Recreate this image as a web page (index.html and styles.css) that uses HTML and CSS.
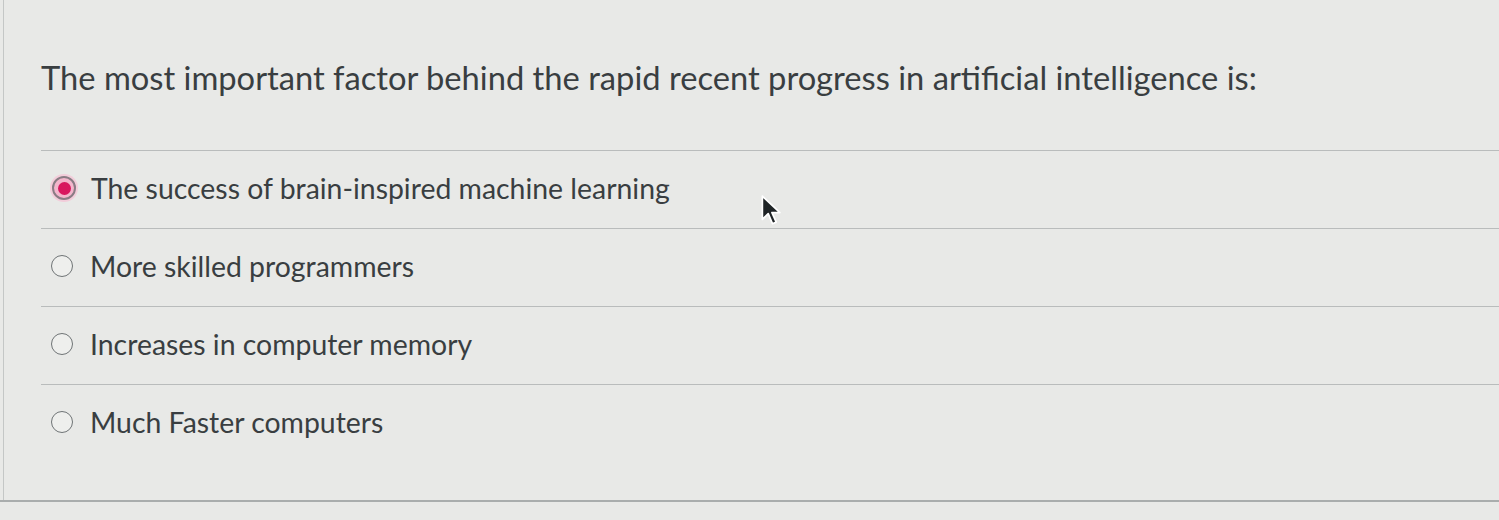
FILE: index.html
```html
<!DOCTYPE html>
<html lang="en">
<head>
<meta charset="utf-8">
<title>Quiz question</title>
<link rel="stylesheet" href="styles.css">
</head>
<body>
<div class="screen">
  <div class="panel">
    <h1 class="question">The most important factor behind the rapid recent progress in artificial intelligence is:</h1>
    <ul class="answers">
      <li class="answer">
        <span class="radio radio-checked"><span class="dot"></span></span>
        <span class="label">The success of brain-inspired machine learning</span>
      </li>
      <li class="answer">
        <span class="radio"></span>
        <span class="label">More skilled programmers</span>
      </li>
      <li class="answer">
        <span class="radio"></span>
        <span class="label">Increases in computer memory</span>
      </li>
      <li class="answer">
        <span class="radio"></span>
        <span class="label">Much Faster computers</span>
      </li>
    </ul>
  </div>
  <div class="footer"></div>
  <svg class="cursor" width="24" height="34" viewBox="0 0 22 32" aria-hidden="true">
    <path d="M1 1 L1 23 L6.5 17.5 L10.5 27 L14 25.5 L10 16.5 L17.5 16.5 Z" fill="#1f2426" stroke="#ffffff" stroke-width="1.6" stroke-linejoin="round"/>
  </svg>
</div>
</body>
</html>
```

FILE: styles.css
```css
html, body {
  margin: 0;
  padding: 0;
}

body {
  background: #e8e9e7;
  font-family: Lato, "Open Sans", "Liberation Sans", sans-serif;
  color: #3a3f42;
  width: 1499px;
  height: 520px;
  overflow: hidden;
}

.screen {
  position: relative;
  height: 520px;
  display: flex;
  flex-direction: column;
}

.panel {
  margin-left: 3px;
  border-left: 1.5px solid #c4c7c6;
  padding-left: 37px;
  height: 500px;
  box-sizing: border-box;
  display: flex;
  flex-direction: column;
}

.question {
  margin: 0;
  padding-top: 57px;
  height: 150px;
  box-sizing: border-box;
  font-size: 32.7px;
  font-weight: 400;
  line-height: 42px;
  color: #393e41;
}

.answers {
  list-style: none;
  margin: 0;
  padding: 0;
}

.answer {
  display: flex;
  align-items: center;
  gap: 17px;
  height: 78px;
  box-sizing: border-box;
  border-top: 1.5px solid #b9bcbc;
  padding-left: 10px;
  padding-bottom: 3px;
}

.label {
  font-size: 28.4px;
  line-height: 34px;
  color: #393e41;
}

.radio {
  width: 22px;
  height: 22px;
  border-radius: 50%;
  border: 1.8px solid #6f7476;
  background: #eeefed;
  box-sizing: border-box;
  flex: none;
  display: flex;
  align-items: center;
  justify-content: center;
}

.radio-checked {
  width: 24px;
  height: 24px;
  margin-left: 1px;
  margin-right: -2px;
  border: 2px solid #8a7c84;
  background: #f3b6cc;
  box-shadow: 0 0 0 2px #f2cdda;
}

.dot {
  width: 13px;
  height: 13px;
  border-radius: 50%;
  background: #d8175e;
}

.footer {
  border-top: 2px solid #a9adad;
  flex: 1;
}

.cursor {
  position: absolute;
  left: 761px;
  top: 195px;
}
```
